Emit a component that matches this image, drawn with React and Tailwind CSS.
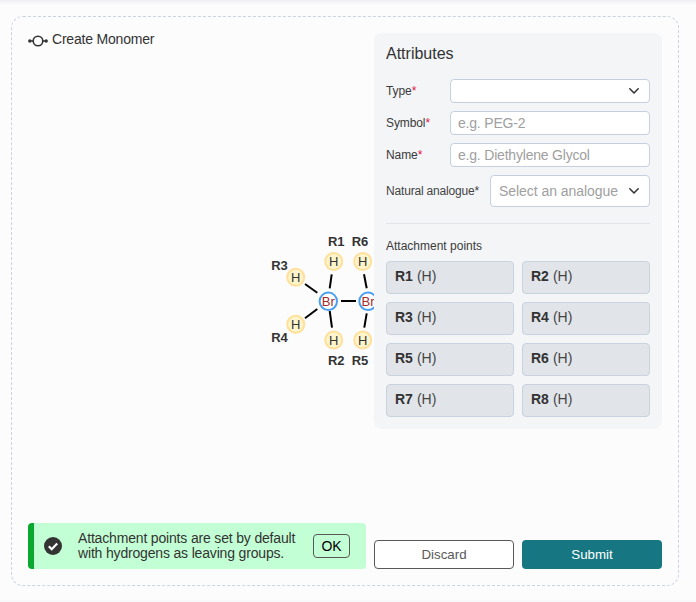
import React from "react";

function Chevron() {
  return (
    <svg width="12" height="8" viewBox="0 0 12 8" fill="none" stroke="#333" strokeWidth="1.5" strokeLinecap="round" strokeLinejoin="round">
      <path d="M1.8 1.8 L6 6 L10.2 1.8" />
    </svg>
  );
}

function Field({ label, placeholder, children }) {
  return (
    <div className="flex items-center h-6">
      <div className="w-16 shrink-0 text-[12px] tracking-[-0.1px] text-[#3a3a3a]">
        {label}
        <span className="text-[#e0163c]">*</span>
      </div>
      <div className="flex-1 h-6 flex items-center px-[7px] bg-white border border-[#c5cfdd] rounded-[4px] text-[14px] tracking-[-0.2px] text-[#a0a0a0]">
        {placeholder}
        {children}
      </div>
    </div>
  );
}

function Molecule() {
  const bonds = [
    [305, 284, 317.3, 292.7],
    [305, 318.3, 317.3, 309],
    [331.7, 274.3, 329.7, 288.3],
    [329.7, 311, 332, 327.7],
    [341, 301, 356, 301],
    [364, 274.3, 366.7, 288.3],
    [366.7, 313.3, 364.3, 327.7],
  ];
  const hs = [
    [295.7, 277.3, "R3", 279.5, 265.5],
    [295.7, 324.3, "R4", 279.5, 337],
    [333.7, 261.5, "R1", 336.3, 241.5],
    [333.7, 340, "R2", 336.3, 360.5],
    [362.7, 261.5, "R6", 360, 241.5],
    [362.7, 340, "R5", 360, 360.5],
  ];
  return (
    <svg className="absolute left-0 top-0 pointer-events-none" width="374" height="400" viewBox="0 0 374 400">
      {bonds.map((b, i) => (
        <line key={i} x1={b[0]} y1={b[1]} x2={b[2]} y2={b[3]} stroke="#000" strokeWidth="2" />
      ))}
      {hs.map(([cx, cy, r, lx, ly]) => (
        <g key={r}>
          <circle cx={cx} cy={cy} r="8.5" fill="#fff5cc" stroke="#ffe09a" strokeWidth="2" />
          <text x={cx} y={cy + 4.5} textAnchor="middle" fontSize="13" fill="#333">H</text>
          <text x={lx} y={ly} dy="4.5" textAnchor="middle" fontSize="13" fontWeight="700" fill="#333">{r}</text>
        </g>
      ))}
      {[328.3, 368].map((cx) => (
        <g key={cx}>
          <circle cx={cx} cy="301.3" r="8.7" fill="#fff" stroke="#4a9ff0" strokeWidth="2" />
          <text x={cx} y="305.8" textAnchor="middle" fontSize="13" fill="#a52a2a">Br</text>
        </g>
      ))}
    </svg>
  );
}

function AP({ n }) {
  return (
    <div className="h-[33px] bg-[#e1e4e8] border border-[#c9d2df] rounded-[4px] pl-2 flex items-start pt-[6px] text-[14px] leading-[16px] text-[#333]">
      <span className="font-bold mr-1">{n}</span>
      <span className="text-[#444]">(H)</span>
    </div>
  );
}

export default function App() {
  return (
    <div className="w-[696px] h-[602px] bg-[#fcfcfd] overflow-hidden relative" style={{ fontFamily: "'Liberation Sans', sans-serif" }}>
      <div className="h-[5px] bg-gradient-to-b from-[#efeff3] to-[#fcfcfd]" />
      <div className="absolute left-0 right-0 bottom-0 h-[2px] bg-[#f8f8fa]" />
      <div className="absolute left-[11px] top-4 w-[668px] h-[570px] border border-dashed border-[#ccd3e0] rounded-[12px]">
        <div className="relative h-full">
          <div className="absolute inset-0 -left-[12px] -top-[17px]"><Molecule /></div>
          <div className="absolute inset-0 p-4 flex gap-2">
            <div className="w-[338px] flex flex-col justify-between">
              <div className="flex items-center gap-[4px] h-[14px] -mt-px text-[14px] tracking-[-0.2px] text-[#333]">
                <svg width="20" height="12" viewBox="0 0 20 12" fill="none" stroke="#333" className="mt-[3px]">
                  <circle cx="10" cy="6" r="4.8" strokeWidth="1.6" />
                  <path d="M2 6h4M14 6h4" strokeWidth="1.6" />
                  <circle cx="1.8" cy="6" r="1.7" fill="#333" stroke="none" />
                  <circle cx="18.2" cy="6" r="1.7" fill="#333" stroke="none" />
                </svg>
                <span>Create Monomer</span>
              </div>
              <div className="h-[46px] bg-[#c3ffd5] rounded-[4px] border-l-[6px] border-[#0aa82e] flex items-center text-[14px] tracking-[-0.17px] leading-[15px] text-[#333]">
                <svg className="ml-[10px] shrink-0" width="18" height="18" viewBox="0 0 18 18">
                  <circle cx="9" cy="9" r="9" fill="#333" />
                  <path d="M4.8 9.3 L7.7 12.2 L13.2 6.4" fill="none" stroke="#fff" strokeWidth="2.2" />
                </svg>
                <div className="ml-[16px] w-[235px]">Attachment points are set by default with hydrogens as leaving groups.</div>
                <button className="h-6 w-[37px] border border-[#585858] rounded-[4px] text-[14px] tracking-normal text-[#000]">OK</button>
              </div>
            </div>
            <div className="w-[288px] flex flex-col justify-between">
              <div className="h-[396px] bg-[#f4f5f7] rounded-[8px] px-3 pt-[11px]">
                <div className="text-[16px] leading-[20px] text-[#333]">Attributes</div>
                <div className="mt-[15px] flex flex-col gap-2">
                  <Field label="Type">
                    <span className="ml-auto mr-[2px]"><Chevron /></span>
                  </Field>
                  <Field label="Symbol" placeholder="e.g. PEG-2" />
                  <Field label="Name" placeholder="e.g. Diethylene Glycol" />
                  <div className="flex items-center h-8">
                    <div className="w-[104px] shrink-0 text-[12px] tracking-[-0.18px] text-[#444]">Natural analogue*</div>
                    <div className="flex-1 h-8 flex items-center pl-2 pr-[9px] bg-white border border-[#c5cfdd] rounded-[4px] text-[14px] tracking-[-0.05px] text-[#a0a0a0]">
                      <span className="flex-1">Select an analogue</span>
                      <Chevron />
                    </div>
                  </div>
                </div>
                <div className="mt-4 h-px bg-[#e1e4e8]" />
                <div className="mt-[15px] text-[12px] leading-[14px] text-[#3a3a3a]">Attachment points</div>
                <div className="mt-2 grid grid-cols-2 gap-2">
                  {["R1", "R2", "R3", "R4", "R5", "R6", "R7", "R8"].map((n) => (
                    <AP key={n} n={n} />
                  ))}
                </div>
              </div>
              <div className="grid grid-cols-2 gap-2 text-[13.3px]">
                <button className="h-[29px] bg-white border border-[#585858] rounded-[4px] text-[#585858]">Discard</button>
                <button className="h-[29px] bg-[#167783] rounded-[4px] text-white">Submit</button>
              </div>
            </div>
          </div>
        </div>
      </div>
    </div>
  );
}
